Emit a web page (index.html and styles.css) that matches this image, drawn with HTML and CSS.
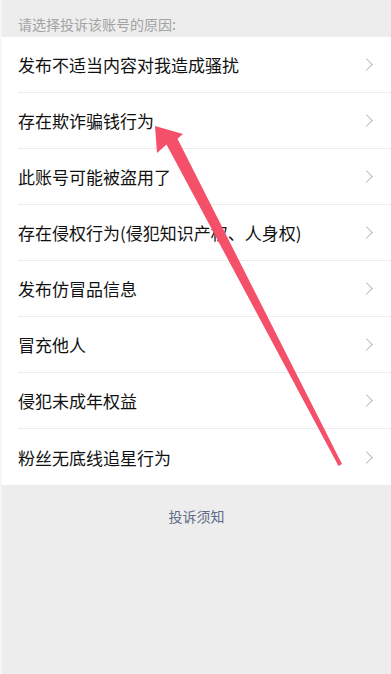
FILE: index.html
```html
<!DOCTYPE html>
<html lang="zh-CN">
<head>
    <meta charset="UTF-8">
    <meta name="viewport" content="width=device-width, initial-scale=1.0">
    <title>投诉</title>
    <link rel="stylesheet" href="styles.css">
</head>
<body>
    <div class="page">
        <div class="tips">请选择投诉该账号的原因:</div>
        <div class="reasons">
            <div class="reason"><span>发布不适当内容对我造成骚扰</span><i class="arrow"></i></div>
            <div class="reason"><span>存在欺诈骗钱行为</span><i class="arrow"></i></div>
            <div class="reason"><span>此账号可能被盗用了</span><i class="arrow"></i></div>
            <div class="reason"><span>存在侵权行为(侵犯知识产权、人身权)</span><i class="arrow"></i></div>
            <div class="reason"><span>发布仿冒品信息</span><i class="arrow"></i></div>
            <div class="reason"><span>冒充他人</span><i class="arrow"></i></div>
            <div class="reason"><span>侵犯未成年权益</span><i class="arrow"></i></div>
            <div class="reason"><span>粉丝无底线追星行为</span><i class="arrow"></i></div>
        </div>
        <div class="notice">投诉须知</div>

        <!-- 标注箭头 -->
        <svg class="mark" width="391" height="674" viewBox="0 0 391 674">
            <polygon points="155,126 183,134 177.5,138.8 342,464 338.5,466 166.5,144.5 157,153" fill="#f5506a"/>
        </svg>
    </div>
</body>
</html>
```

FILE: styles.css
```css
body {
    margin: 0;
    padding: 0;
    background-color: #ededed;
    font-family: "Noto Sans CJK SC", "Noto Sans", sans-serif;
}
.page {
    position: relative;
    min-height: 100vh;
    border-left: 2px solid #f6f6f6;
    box-sizing: border-box;
}
.tips {
    padding: 17px 16px 5px;
    font-size: 14px;
    line-height: 15px;
    color: #a3a3a3;
}
.reasons {
    background-color: #fff;
}
.reason {
    display: flex;
    align-items: center;
    justify-content: space-between;
    height: 56px;
    margin-left: 16px;
    padding-right: 18px;
    border-bottom: 1px solid #ececec;
    box-sizing: border-box;
    font-size: 17px;
    color: #111;
}
.reason:last-child {
    border-bottom: none;
}
.arrow {
    width: 8px;
    height: 8px;
    border-top: 1.5px solid #b8b8b8;
    border-right: 1.5px solid #b8b8b8;
    transform: rotate(45deg);
    margin-right: 2px;
}
.notice {
    padding-top: 23px;
    text-align: center;
    font-size: 14px;
    line-height: 16px;
    color: #5f6b87;
}
/* Arrow */
.mark {
    position: absolute;
    top: 0;
    left: -2px;
    pointer-events: none;
}
```
